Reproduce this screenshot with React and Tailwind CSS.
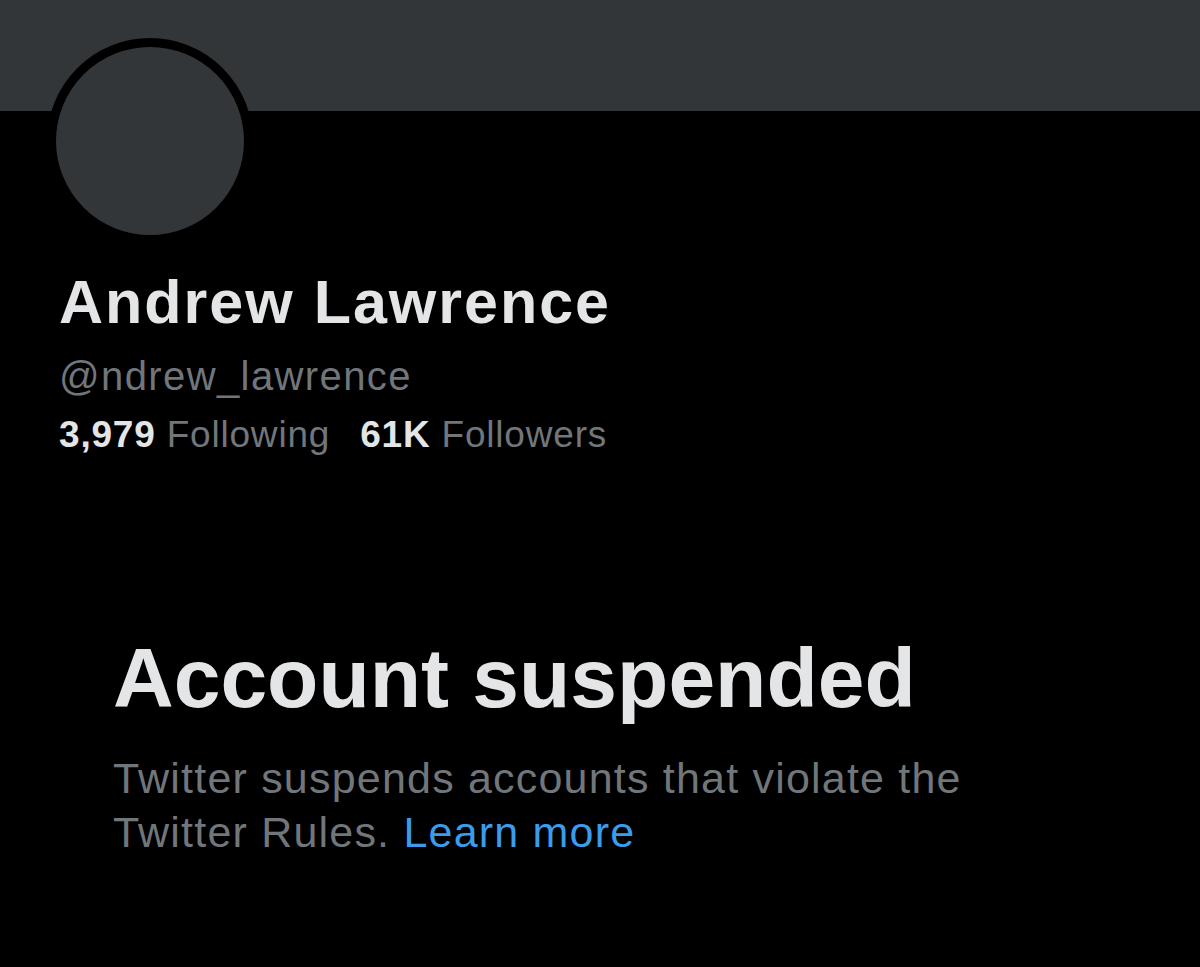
export default function App() {
  return (
    <div className="w-[1200px] h-[967px] bg-black overflow-hidden relative" style={{ fontFamily: "'Liberation Sans', Arial, sans-serif" }}>
      {/* banner */}
      <div className="h-[111px] bg-[#333639]" />

      {/* avatar sits over the banner edge */}
      <div className="absolute left-[47px] top-[38px] w-[206px] h-[206px] rounded-full border-[9px] border-black bg-[#333639]" />

      <div className="pl-[59px] pt-[156px]">
        <h1 className="text-[61px] font-bold leading-[70px] text-[#e3e5e6] tracking-[2px]">Andrew Lawrence</h1>
        <div className="mt-[15px] text-[40px] leading-[48px] text-[#71767b] tracking-[1.4px]">@ndrew_lawrence</div>
        <div className="mt-[13px] flex items-baseline gap-[30px] text-[37px] leading-[44px] tracking-[0.8px]">
          <span>
            <span className="font-bold text-[#e3e5e6]">3,979</span>
            <span className="text-[#71767b]"> Following</span>
          </span>
          <span>
            <span className="font-bold text-[#e3e5e6]">61K</span>
            <span className="text-[#71767b]"> Followers</span>
          </span>
        </div>
      </div>

      <div className="pl-[113px] pt-[173px]">
        <h2 className="text-[84px] font-bold leading-[96px] text-[#e3e5e6]">Account suspended</h2>
        <p className="mt-[25px] text-[43px] leading-[54px] text-[#71767b] tracking-[1.2px] w-[880px]">
          Twitter suspends accounts that violate the Twitter Rules.{" "}
          <span className="text-[#3b9cec]">Learn more</span>
        </p>
      </div>
    </div>
  );
}
